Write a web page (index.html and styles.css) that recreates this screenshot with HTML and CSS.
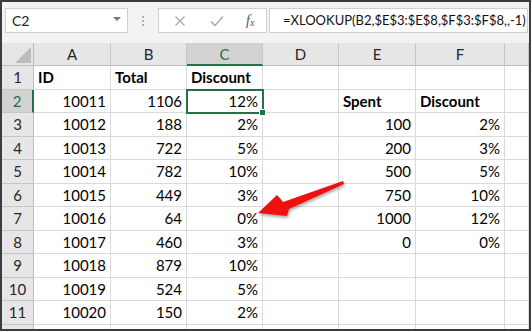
FILE: index.html
```html
<!DOCTYPE html>
<html lang="en">
<head>
    <meta charset="UTF-8">
    <title>XLOOKUP</title>
    <link rel="stylesheet" href="styles.css">
</head>
<body>
    <div class="screen">
        <div class="frame">
            <!-- Formula bar -->
            <div class="formula-bar">
                <div class="name-box">
                    <span>C2</span>
                    <span class="caret"></span>
                </div>
                <div class="grip"><i></i><i></i><i></i></div>
                <div class="fx-box">
                    <svg class="icon" width="12" height="12" viewBox="0 0 12 12"><path d="M1.5 1.5 L10.5 10.5 M10.5 1.5 L1.5 10.5" stroke="#a6a6a6" stroke-width="1.3" fill="none"/></svg>
                    <svg class="icon" width="14" height="12" viewBox="0 0 14 12"><path d="M1 6.5 L5 10.5 L13 1.5" stroke="#a6a6a6" stroke-width="1.4" fill="none"/></svg>
                    <span class="fx"><em>f</em><span>x</span></span>
                </div>
                <div class="formula">=XLOOKUP(B2,$E$3:$E$8,$F$3:$F$8,,-1)</div>
            </div>

            <!-- Sheet -->
            <div class="sheet">
                <div class="corner"><span class="tri"></span></div>
                <div class="col-hd">A</div>
                <div class="col-hd">B</div>
                <div class="col-hd sel">C</div>
                <div class="col-hd">D</div>
                <div class="col-hd">E</div>
                <div class="col-hd">F</div>
                <div class="col-hd"></div>

                <div class="row-hd">1</div>
                <div class="cell b">ID</div><div class="cell b">Total</div><div class="cell b">Discount</div><div class="cell"></div><div class="cell"></div><div class="cell"></div><div class="cell"></div>

                <div class="row-hd sel">2</div>
                <div class="cell n">10011</div><div class="cell n">1106</div><div class="cell n active">12%</div><div class="cell"></div><div class="cell b">Spent</div><div class="cell b">Discount</div><div class="cell"></div>

                <div class="row-hd">3</div>
                <div class="cell n">10012</div><div class="cell n">188</div><div class="cell n">2%</div><div class="cell"></div><div class="cell n">100</div><div class="cell n">2%</div><div class="cell"></div>

                <div class="row-hd">4</div>
                <div class="cell n">10013</div><div class="cell n">722</div><div class="cell n">5%</div><div class="cell"></div><div class="cell n">200</div><div class="cell n">3%</div><div class="cell"></div>

                <div class="row-hd">5</div>
                <div class="cell n">10014</div><div class="cell n">782</div><div class="cell n">10%</div><div class="cell"></div><div class="cell n">500</div><div class="cell n">5%</div><div class="cell"></div>

                <div class="row-hd">6</div>
                <div class="cell n">10015</div><div class="cell n">449</div><div class="cell n">3%</div><div class="cell"></div><div class="cell n">750</div><div class="cell n">10%</div><div class="cell"></div>

                <div class="row-hd">7</div>
                <div class="cell n">10016</div><div class="cell n">64</div><div class="cell n">0%</div><div class="cell"></div><div class="cell n">1000</div><div class="cell n">12%</div><div class="cell"></div>

                <div class="row-hd">8</div>
                <div class="cell n">10017</div><div class="cell n">460</div><div class="cell n">3%</div><div class="cell"></div><div class="cell n">0</div><div class="cell n">0%</div><div class="cell"></div>

                <div class="row-hd">9</div>
                <div class="cell n">10018</div><div class="cell n">879</div><div class="cell n">10%</div><div class="cell"></div><div class="cell"></div><div class="cell"></div><div class="cell"></div>

                <div class="row-hd">10</div>
                <div class="cell n">10019</div><div class="cell n">524</div><div class="cell n">5%</div><div class="cell"></div><div class="cell"></div><div class="cell"></div><div class="cell"></div>

                <div class="row-hd">11</div>
                <div class="cell n">10020</div><div class="cell n">150</div><div class="cell n">2%</div><div class="cell"></div><div class="cell"></div><div class="cell"></div><div class="cell"></div>

                <div class="row-hd"></div>
                <div class="cell"></div><div class="cell"></div><div class="cell"></div><div class="cell"></div><div class="cell"></div><div class="cell"></div><div class="cell"></div>
            </div>
        </div>

        <!-- Callout arrow -->
        <svg class="arrow" width="532" height="332" viewBox="0 0 532 332">
            <polygon points="258,213 277,195 283,202 343,181 344,184 289,209 287,216" fill="#f01010"/>
        </svg>
    </div>
</body>
</html>
```

FILE: styles.css
```css
body {
    margin: 0;
    background: #fff;
    font-family: Lato, "Open Sans", sans-serif;
    color: #000;
}
.screen {
    position: relative;
    width: 532px;
    height: 332px;
}
.frame {
    width: 531px;
    height: 331px;
    box-sizing: border-box;
    border: 2px solid #3c3c3c;
    display: flex;
    flex-direction: column;
    overflow: hidden;
    background: #fff;
}
.formula-bar {
    height: 41px;
    flex: none;
    box-sizing: border-box;
    background: #f3f3f3;
    display: flex;
    align-items: flex-start;
    padding: 6px 0 0 3px;
}
.name-box {
    flex: none;
    width: 123px;
    height: 25px;
    box-sizing: border-box;
    background: #fff;
    border: 1px solid #d0d0d0;
    display: flex;
    align-items: center;
    justify-content: space-between;
    padding: 0 6px 0 6px;
    font-size: 14px;
    color: #222;
}
.caret {
    width: 0;
    height: 0;
    border-left: 4px solid transparent;
    border-right: 4px solid transparent;
    border-top: 4px solid #777;
    margin-top: -3px;
}
.grip {
    flex: none;
    width: 30px;
    height: 25px;
    display: flex;
    flex-direction: column;
    align-items: center;
    justify-content: center;
    gap: 2px;
}
.grip i {
    width: 2px;
    height: 2px;
    background: #b0b0b0;
}
.fx-box {
    flex: none;
    width: 109px;
    height: 25px;
    box-sizing: border-box;
    background: #fff;
    border: 1px solid #d0d0d0;
    display: flex;
    align-items: center;
    padding: 0 0 0 15px;
    gap: 24px;
}
.fx {
    font-family: "Liberation Serif", serif;
    font-size: 14px;
    color: #555;
    margin-left: -2px;
}
.fx em {
    font-style: italic;
}
.fx span {
    font-style: italic;
    font-size: 10px;
    vertical-align: -1px;
}
.formula {
    flex: 1;
    min-width: 0;
    overflow: hidden;
    height: 25px;
    box-sizing: border-box;
    margin: 0 1px 0 2px;
    background: #fff;
    border: 1px solid #d0d0d0;
    padding: 0 0 0 13px;
    font-size: 13px;
    line-height: 23px;
    color: #111;
    white-space: nowrap;
}
.sheet {
    flex: 1;
    display: grid;
    grid-template-columns: 32px 77px 76px 76px 76px 77px 89px 1fr;
    grid-template-rows: 23px;
    grid-auto-rows: 23.5px;
    font-size: 15px;
}
.sheet > div {
    box-sizing: border-box;
    border-right: 1px solid #dadada;
    border-bottom: 1px solid #dadada;
    white-space: nowrap;
    overflow: visible;
}
.corner {
    position: relative;
    background: #e6e6e6;
    border-right-color: #bdbdbd !important;
    border-bottom-color: #bdbdbd !important;
}
.tri {
    position: absolute;
    right: 2px;
    bottom: 2px;
    width: 0;
    height: 0;
    border-left: 16px solid transparent;
    border-bottom: 16px solid #bcbcbc;
}
.col-hd {
    background: #e6e6e6;
    border-right-color: #c6c6c6 !important;
    border-bottom-color: #bdbdbd !important;
    text-align: center;
    line-height: 22px;
    color: #262626;
}
.col-hd.sel {
    background: #d2d2d2;
    color: #217346;
    border-bottom: 2px solid #217346 !important;
}
.row-hd {
    background: #e6e6e6;
    border-right-color: #bdbdbd !important;
    border-bottom-color: #c6c6c6 !important;
    text-align: center;
    line-height: 23px;
    color: #262626;
}
.row-hd.sel {
    background: #d2d2d2;
    color: #217346;
    border-right: 2px solid #217346 !important;
}
.cell {
    line-height: 23px;
    padding: 0 4px;
}
.cell.n {
    text-align: right;
}
.cell.b {
    font-weight: bold;
}
.cell.active {
    position: relative;
    outline: 2px solid #217346;
    outline-offset: -1px;
}
.cell.active::after {
    content: "";
    position: absolute;
    right: -4px;
    bottom: -4px;
    width: 5px;
    height: 5px;
    background: #217346;
    border: 1px solid #fff;
}
.arrow {
    position: absolute;
    left: 0;
    top: 0;
    pointer-events: none;
    filter: drop-shadow(1px 2px 1.5px rgba(0, 0, 0, 0.35));
}
```
